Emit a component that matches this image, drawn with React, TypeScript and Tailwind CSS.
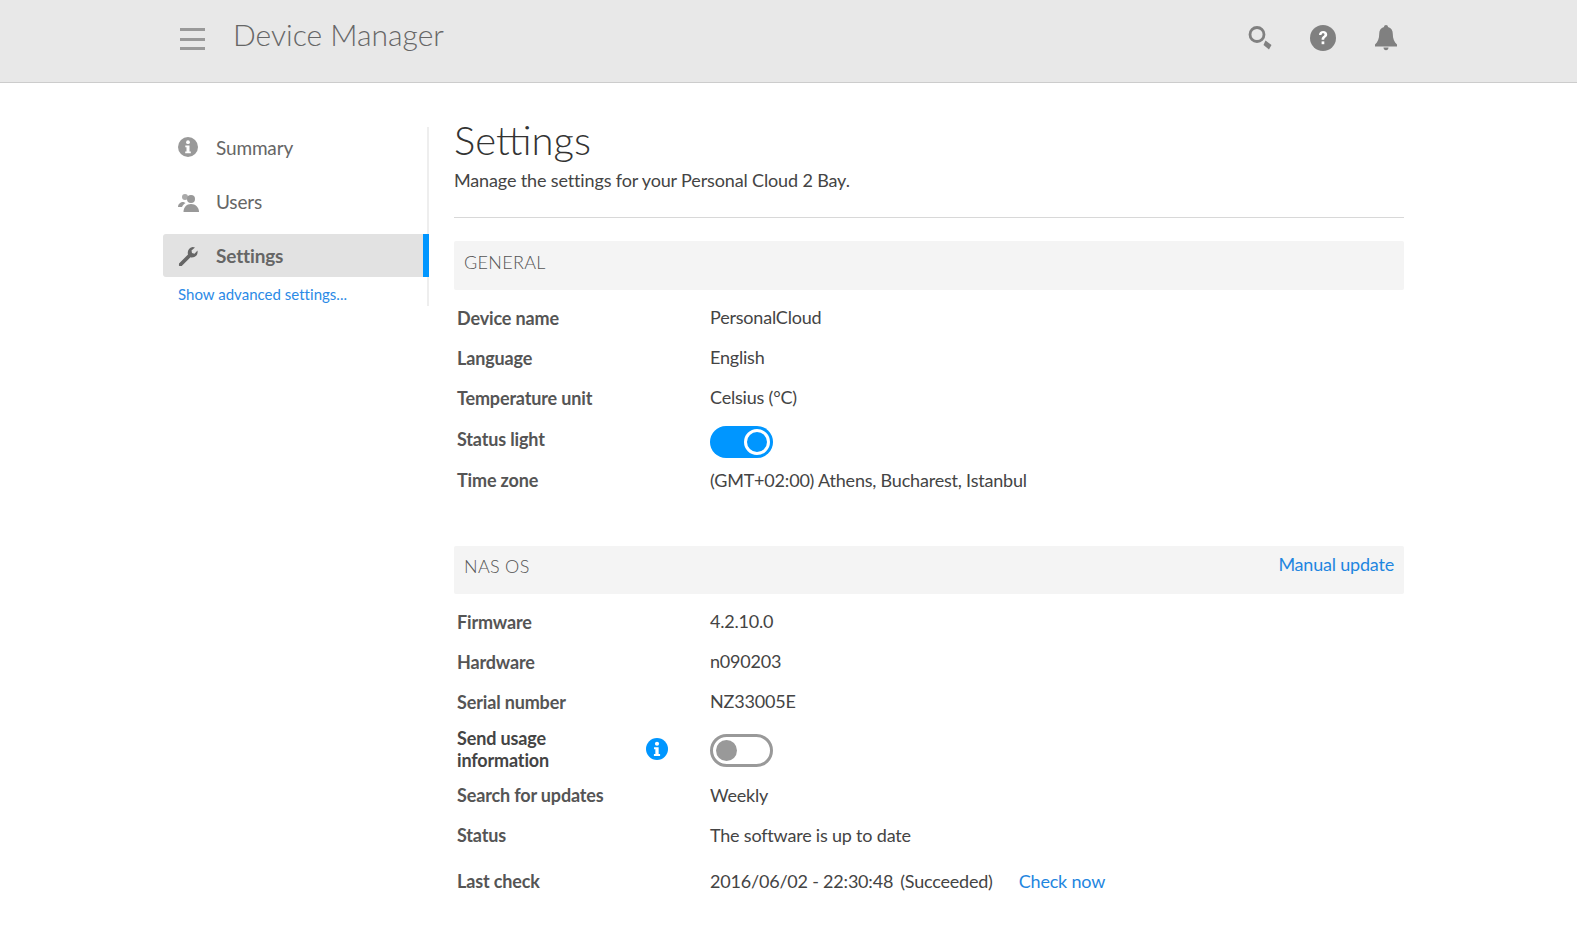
import type { ReactNode } from 'react'

const font = { fontFamily: 'Lato, "Open Sans", sans-serif' }

type RowProps = {
  label: ReactNode
  children: ReactNode
  className?: string
  valueClass?: string
}

function Row({ label, children, className = 'h-10', valueClass = '-mt-[2px]' }: RowProps) {
  return (
    <div className={`flex items-center ${className}`}>
      <div className="w-[256px] pl-[3px] text-[18px] font-bold leading-[22px] text-[#555] tracking-[-0.15px]">{label}</div>
      <div className={`flex items-center text-[18px] text-[#444] tracking-[-0.2px] ${valueClass}`}>{children}</div>
    </div>
  )
}

function Toggle({ on }: { on: boolean }) {
  if (on) {
    return (
      <div className="flex h-8 w-[63px] items-center justify-end rounded-full bg-[#0096ff] pr-[3px]">
        <div className="h-[26px] w-[26px] rounded-full border-[3px] border-white bg-[#0096ff]" />
      </div>
    )
  }
  return (
    <div className="flex h-[33px] w-[63px] items-center rounded-full border-[3px] border-[#999] bg-white pl-[3px]">
      <div className="h-[21px] w-[21px] rounded-full bg-[#999]" />
    </div>
  )
}

function SectionHead({ title, action }: { title: string; action?: string }) {
  return (
    <div className={`flex items-start justify-between rounded-[2px] bg-[#f4f4f4] px-[10px] ${action ? 'h-[48px] pt-[7px]' : 'h-[49px] pt-[8px]'}`}>
      <span className="text-[18px] font-light tracking-[0.3px] text-[#555]">{title}</span>
      {action && <a className="-mt-[2px] text-[18px] tracking-[-0.2px] text-[#1f86e0]">{action}</a>}
    </div>
  )
}

function InfoIcon({ className, fill }: { className: string; fill: string }) {
  return (
    <svg viewBox="0 0 20 20" className={className}>
      <circle cx="10" cy="10" r="10" fill={fill} />
      <circle cx="10" cy="5.2" r="1.9" fill="#fff" />
      <path d="M7.3 8.4h4.2v6.1h1.3v1.8H7.2v-1.8h1.3v-4.3H7.3z" fill="#fff" />
    </svg>
  )
}

export default function App() {
  return (
    <div className="min-h-[945px] bg-white" style={font}>
      <header className="flex h-[83px] items-start border-b border-[#ccc] bg-[#e8e8e8] pl-[180px] pr-[178px]">
        <div className="mt-[28px] flex w-[25px] flex-col gap-[6.5px]">
          <span className="h-[3px] bg-[#999]" />
          <span className="h-[3px] bg-[#999]" />
          <span className="h-[3px] bg-[#999]" />
        </div>
        <h1 className="ml-[28px] mt-[13px] text-[30px] font-light leading-[42px] text-[#666]">Device Manager</h1>
        <div className="ml-auto mt-[25px] flex items-center gap-[37px]">
          <svg viewBox="0 0 26 26" className="h-[26px] w-[26px]">
            <circle cx="10" cy="9.5" r="7" fill="none" stroke="#808080" strokeWidth="2.8" />
            <path d="M18.5 15.5l6 4.500-2.500 4.500-5.500-4.500z" fill="#808080" />
          </svg>
          <svg viewBox="0 0 26 26" className="h-[26px] w-[26px]">
            <circle cx="13" cy="13" r="13" fill="#808080" />
            <path d="M9 10c0-2.600 1.900-4 4.200-4 2.300 0 4 1.400 4 3.500 0 2.800-3 2.900-3 5.200h-2.600c0-3.400 2.900-3.600 2.900-5.100 0-.8-.6-1.300-1.400-1.300-.9 0-1.500.6-1.600 1.700z" fill="#fff" />
            <rect x="11.6" y="16.4" width="2.7" height="2.8" fill="#fff" />
          </svg>
          <svg viewBox="0 0 26 26" className="h-[26px] w-[26px]">
            <path d="M13 0c1.200 0 2 .8 2 2 3.400.9 4.800 3.600 4.800 7 0 4.500 1.400 8 4.200 10.500v2H2v-2C4.800 17 6.200 13.500 6.200 9c0-3.400 1.400-6.100 4.800-7 0-1.200.8-2 2-2z" fill="#808080" />
            <path d="M10.500 22.500h5c0 1.600-1 2.800-2.500 2.800s-2.500-1.200-2.500-2.800z" fill="#808080" />
          </svg>
        </div>
      </header>

      <div className="flex items-start pl-[163px] pr-[173px] pt-[44px]">
        <aside className="h-[179px] w-[266px] shrink-0 border-r-[2px] border-[#eee]">
          <nav className="text-[19px] text-[#666]">
            <div className="flex h-[43px] items-center pl-[15px]">
              <InfoIcon className="h-5 w-5 -translate-y-[2px]" fill="#999" />
              <span className="ml-[18px] tracking-[-0.15px]">Summary</span>
            </div>
            <div className="mt-[11px] flex h-[43px] items-center pl-[15px]">
              <svg viewBox="0 0 22 20" className="h-5 w-[22px]">
                <circle cx="7" cy="4" r="3" fill="#aaa" />
                <path d="M0 14c0-3 2.500-5 5.500-5l2 1c-2 1.500-3 2.500-3.500 4z" fill="#999" />
                <circle cx="13" cy="6" r="4" fill="#999" />
                <path d="M5.500 19c0-4.500 3-8 7.500-8s8 3.500 8 8z" fill="#999" />
              </svg>
              <span className="ml-4 tracking-[-0.15px]">Users</span>
            </div>
            <div className="-mr-[2px] mt-[10px] flex h-[43px] items-center rounded-l-[3px] border-r-[6px] border-[#0096ff] bg-[#e2e2e2] pl-[15px] pt-[2px] font-bold">
              <svg viewBox="0 0 20 20" className="h-5 w-5 -translate-y-[1px]">
                <path d="M1 17.500 10 8.500C9 5 11 1.500 14.500 1c1 0 2 .2 2.500.5l-3.500 3 .5 2.500 2.500.7 3-3.200c.5 3.500-1 6-4 6.800-1 .2-2 .2-3-.1l-9 9c-.5.500-1.500.500-2 0-.5-.5-.8-1.200-.5-1.700z" fill="#666" />
              </svg>
              <span className="ml-[18px] tracking-[-0.15px]">Settings</span>
            </div>
          </nav>
          <a className="mt-[6px] block pl-[15px] text-[15px] tracking-[0.02px] text-[#2b8ae6]">Show advanced settings...</a>
        </aside>

        <main className="min-w-0 flex-1 pl-[25px]">
          <div className="-mt-[11px] border-b border-[#d8d8d8] pb-[25px]">
            <h2 className="text-[40px] font-light leading-[48px] text-[#333]">Settings</h2>
            <p className="mt-[4px] text-[18px] leading-[24px] tracking-[-0.14px] text-[#444]">Manage the settings for your Personal Cloud 2 Bay.</p>
          </div>

          <section className="mt-[23px]">
            <SectionHead title="GENERAL" />
            <div className="mt-[8px]">
              <Row label="Device name">PersonalCloud</Row>
              <Row label="Language">English</Row>
              <Row label="Temperature unit">Celsius (°C)</Row>
              <Row label="Status light" className="h-[42px]"><div className="mt-[8px]"><Toggle on /></div></Row>
              <Row label="Time zone" valueClass="mt-0">(GMT+02:00) Athens, Bucharest, Istanbul</Row>
            </div>
          </section>

          <section className="mt-[46px]">
            <SectionHead title="NAS OS" action="Manual update" />
            <div className="mt-[8px]">
              <Row label="Firmware">4.2.10.0</Row>
              <Row label="Hardware">n090203</Row>
              <Row label="Serial number">NZ33005E</Row>
              <Row
                className="h-[53px]"
                label={
                  <div className="flex items-center justify-between pr-[42px]">
                    <span className="text-[#444]">Send usage<br />information</span>
                    <InfoIcon className="h-[22px] w-[22px]" fill="#0096ff" />
                  </div>
                }
              >
                <div className="mt-[6px]"><Toggle on={false} /></div>
              </Row>
              <Row label="Search for updates" valueClass="mt-0">Weekly</Row>
              <Row label="Status" valueClass="mt-0">The software is up to date</Row>
              <Row label="Last check" className="mt-[6px] h-10" valueClass="mt-0">
                <span>2016/06/02 - 22:30:48</span>
                <span className="ml-[7px]">(Succeeded)</span>
                <a className="ml-[26px] text-[#1f86e0]">Check now</a>
              </Row>
            </div>
          </section>
        </main>
      </div>
    </div>
  )
}
